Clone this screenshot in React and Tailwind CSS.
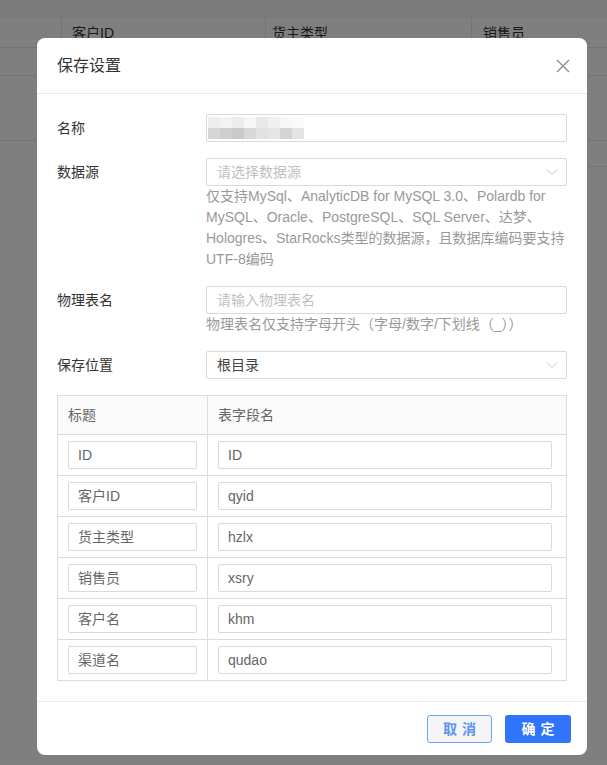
import React from 'react';

const font = { fontFamily: '"Liberation Sans", "Noto Sans CJK SC", sans-serif' };

const fields = [
  { title: 'ID', name: 'ID' },
  { title: '客户ID', name: 'qyid' },
  { title: '货主类型', name: 'hzlx' },
  { title: '销售员', name: 'xsry' },
  { title: '客户名', name: 'khm' },
  { title: '渠道名', name: 'qudao' },
];

// mosaic that hides the name value
const mosaic = [
  ['#eeeeee', '#f3f3f3', '#ececec', '#f6f6f6', '#e9e9e9', '#f0f0f0', '#f7f7f7', '#fafafa'],
  ['#d6d6d6', '#cfcfcf', '#c9c9c9', '#d8d8d8', '#e2e2e2', '#e6e6e6', '#d4d4d4', '#e4e4e4'],
];

function Chevron() {
  return (
    <svg width="12" height="8" viewBox="0 0 12 8" fill="none" stroke="#c4c4c4" strokeWidth="1">
      <path d="M1 1.5l5 5 5-5" />
    </svg>
  );
}

function FormRow({ label, children, help }) {
  return (
    <div className="flex">
      <div className="w-[149px] h-7 flex items-center text-sm text-[#333]">{label}</div>
      <div className="flex-1">
        {children}
        {help && <div className="text-sm leading-[21px] text-[#999]">{help}</div>}
      </div>
    </div>
  );
}

export default function App() {
  return (
    <div className="relative w-full h-screen overflow-hidden bg-white" style={font}>
      {/* page behind the dialog */}
      <div className="h-[18px] bg-[#f4f4f4]" />
      <div className="flex h-[30px] border-b border-[#e6e6e6] text-sm text-[#333]">
        <div className="w-[62px] border-r border-[#e6e6e6]" />
        <div className="w-[204px] border-r border-[#e6e6e6] pl-[10px] flex items-center">客户ID</div>
        <div className="w-[206px] border-r border-[#e6e6e6] pl-[6px] flex items-center">货主类型</div>
        <div className="flex-1 pl-[11px] flex items-center">销售员</div>
      </div>
      <div className="h-[28px] border-b border-[#e6e6e6]" />
      <div className="h-[65px] border-b border-[#e6e6e6]" />
      <div className="h-[26px] border-b border-[#e6e6e6] ml-[587px]" />

      <div className="absolute inset-0 bg-black/50" />

      {/* dialog */}
      <div className="absolute left-[37px] top-[38px] w-[550px] h-[717px] bg-white rounded-lg flex flex-col">
        <div className="h-[56px] flex items-center justify-between pl-5 pr-[17px] border-b border-[#e8e8e8]">
          <span className="text-base text-[#333]">保存设置</span>
          <svg width="14" height="14" viewBox="0 0 14 14" stroke="#8c8c8c" strokeWidth="1.3">
            <path d="M1 1l12 12M13 1L1 13" />
          </svg>
        </div>

        <div className="flex-1 px-5 pt-5">
          <div className="flex flex-col gap-4">
            <FormRow label="名称">
              <div className="h-7 border border-[#d9d9d9] rounded-[2px] flex items-center pl-[1px]">
                <div className="flex flex-col">
                  {mosaic.map((row, i) => (
                    <div key={i} className="flex">
                      {row.map((c, j) => (
                        <div key={j} className="w-3 h-[11px]" style={{ backgroundColor: c }} />
                      ))}
                    </div>
                  ))}
                </div>
              </div>
            </FormRow>

            <FormRow
              label="数据源"
              help="仅支持MySql、AnalyticDB for MySQL 3.0、Polardb for MySQL、Oracle、PostgreSQL、SQL Server、达梦、Hologres、StarRocks类型的数据源，且数据库编码要支持UTF-8编码"
            >
              <div className="h-7 border border-[#d9d9d9] rounded-[2px] flex items-center justify-between pl-[10px] pr-[8px] text-sm text-[#bfbfbf]">
                <span>请选择数据源</span>
                <Chevron />
              </div>
            </FormRow>

            <FormRow label="物理表名" help="物理表名仅支持字母开头（字母/数字/下划线（_））">
              <div className="h-7 border border-[#d9d9d9] rounded-[2px] flex items-center pl-[10px] text-sm text-[#bfbfbf]">
                请输入物理表名
              </div>
            </FormRow>

            <FormRow label="保存位置">
              <div className="h-7 border border-[#d9d9d9] rounded-[2px] flex items-center justify-between pl-[10px] pr-[8px] text-sm text-[#444]">
                <span>根目录</span>
                <Chevron />
              </div>
            </FormRow>

            <div className="border border-[#dcdcdc] text-sm">
              <div className="flex h-[39px] bg-[#fafafa] border-b border-[#dcdcdc] text-[#666]">
                <div className="w-[150px] border-r border-[#dcdcdc] pl-[10px] flex items-center">标题</div>
                <div className="flex-1 pl-[10px] flex items-center">表字段名</div>
              </div>
              {fields.map((f, i) => (
                <div key={f.name} className={`flex ${i < fields.length - 1 ? 'border-b border-[#dcdcdc]' : ''}`}>
                  <div className="w-[150px] border-r border-[#dcdcdc] pl-[10px] pr-[10px] pt-[6px] pb-[6px]">
                    <div className="h-7 border border-[#d9d9d9] rounded-[2px] flex items-center pl-[9px] text-[#666]">{f.title}</div>
                  </div>
                  <div className="flex-1 pl-[10px] pr-[14px] pt-[6px] pb-[6px]">
                    <div className="h-7 border border-[#d9d9d9] rounded-[2px] flex items-center pl-[9px] text-[#666]">{f.name}</div>
                  </div>
                </div>
              ))}
            </div>
          </div>
        </div>

        <div className="h-[54px] border-t border-[#ebebeb] flex items-center justify-end gap-[13px] pr-4">
          <button className="w-[65px] h-7 rounded-[3px] border border-[#6aa3fb] bg-[#f5f5f5] text-sm font-bold text-[#5a92f8] tracking-[5px] pl-[5px]">
            取消
          </button>
          <button className="w-[66px] h-7 rounded-[3px] bg-[#2f74fa] text-sm font-bold text-white tracking-[5px] pl-[5px]">
            确定
          </button>
        </div>
      </div>
    </div>
  );
}
